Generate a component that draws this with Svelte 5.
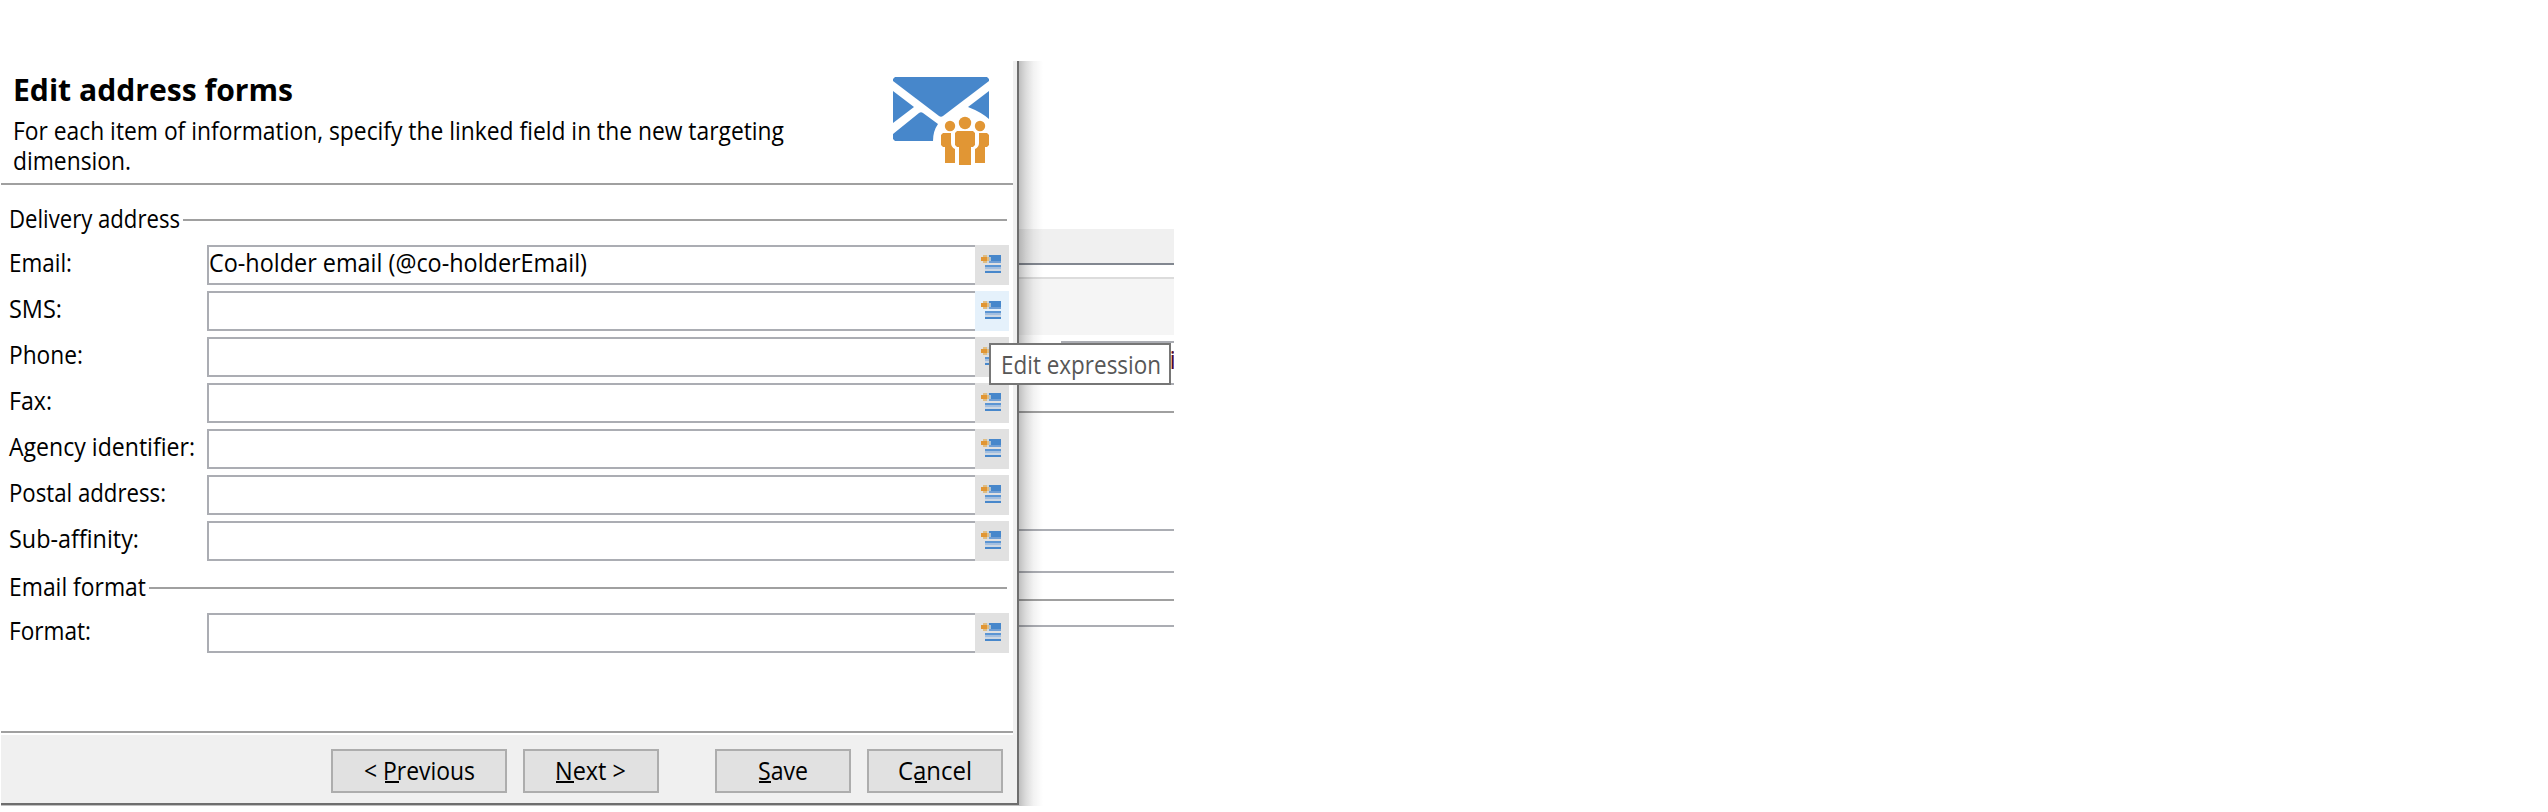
<script>
  const deliveryFields = [
    { label: 'Email:', w: 63, value: 'Co-holder email (@co-holderEmail)' },
    { label: 'SMS:', w: 53 },
    { label: 'Phone:', w: 74 },
    { label: 'Fax:', w: 43 },
    { label: 'Agency identifier:', w: 186 },
    { label: 'Postal address:', w: 157 },
    { label: 'Sub-affinity:', w: 130 },
  ];
  const formatFields = [{ label: 'Format:', w: 82 }];
  const buttons = [
    { name: 'prev', before: '< ', key: 'P', after: 'revious', w: 111, ux: 21, uw: 14 },
    { name: 'next', before: '', key: 'N', after: 'ext >', w: 71, ux: 1, uw: 18 },
    { name: 'save', before: '', key: 'S', after: 'ave', w: 50, ux: 1, uw: 12 },
    { name: 'cancel', before: 'C', key: 'a', after: 'ncel', w: 74, ux: 17, uw: 12 },
  ];
  let hovered = $state(1);
</script>

{#snippet line(text, w, h, base)}
  <svg class="line" width={w} height={h}><text x="0" y={base} textLength={w} lengthAdjust="spacingAndGlyphs">{text}</text></svg>
{/snippet}

{#snippet exprIcon()}
  <svg class="expr" width="20" height="18" viewBox="0 0 20 18" shape-rendering="crispEdges">
    <path fill="#4787cb" d="M8 0h12v6H8zM4 16h16v2H4z" />
    <path fill="#709fd5" d="M8 6h12v2H8z" />
    <path fill="#5b95d3" d="M4 10h16v2H4z" />
    <path fill="#a3bfe0" d="M4 12h16v2H4z" />
    <path fill="#cdd7e2" d="M4 14h16v2H4zM6 0h2v8H6z" />
    <path fill="#adc1d2" d="M8 2h2v4H8z" />
    <path fill="#dfbd83" d="M2 0h4v2H2zM6 2h2v4H6zM2 6h4v2H2z" />
    <path fill="#e19634" d="M0 2h6v4H0z" />
  </svg>
{/snippet}

{#snippet rows(fields, offset)}
  {#each fields as f, i}
    <div class="row">
      <div class="label">{@render line(f.label, f.w, 40, 27)}</div>
      <div class="input">{#if f.value}{@render line(f.value, 378, 36, 24.5)}{/if}</div>
      <button class="pick" class:hot={hovered === i + offset} onmouseenter={() => (hovered = i + offset)}>
        {@render exprIcon()}
      </button>
    </div>
  {/each}
{/snippet}

<main>
  <section class="backdrop">
    <div class="band"></div>
    <div class="rule pale"></div>
    <div class="panel"></div>
    <div class="cell"><svg class="line" width="6" height="36"><text x="1.500" y="26">i</text></svg></div>
    <div class="rule r1"></div>
    <div class="rule r2"></div>
    <div class="rule r3"></div>
    <div class="rule r4"></div>
    <div class="rule r5"></div>
  </section>
  <div class="shade-right"></div>
  <div class="shade-bottom"></div>

  <section class="dialog">
    <header>
      <div class="heading">
        <h1>{@render line('Edit address forms', 280, 36, 30)}</h1>
        <p>{@render line('For each item of information, specify the linked field in the new targeting', 771, 30, 22.5)}</p>
        <p>{@render line('dimension.', 118, 30, 22.5)}</p>
      </div>
      <svg class="logo" width="96" height="88" viewBox="0 0 96 88">
        <g fill="#4787cb">
          <path d="M2 0H94L96 2V4L50 39Q48 40.500 46 39L0 4V2z" />
          <path d="M0 14L21 30L0 46z" />
          <path d="M96 14V42Q88 35 75 30z" />
          <path d="M0 57L26 36Q28 34.500 30 36L45 47Q40 54 40 64H2L0 62z" />
        </g>
        <g fill="#e19634">
          <circle cx="57" cy="49" r="5.200" /><circle cx="72" cy="46" r="6.200" /><circle cx="87" cy="49" r="5.200" />
          <path d="M64 54H80L82 56V68L80 70H78V88H66V70H64L62 68V56z" />
          <path d="M50 56H58V66Q58 70 62 72V86H52V70H50L48 68V58z" />
          <path d="M94 56H86V66Q86 70 82 72V86H92V70H94L96 68V58z" />
        </g>
      </svg>
    </header>

    <div class="body">
      <div class="group">{@render line('Delivery address', 171, 24, 17.5)}<i></i></div>
      {@render rows(deliveryFields, 0)}
      <div class="group second">{@render line('Email format', 137, 24, 17.5)}<i></i></div>
      {@render rows(formatFields, 7)}
    </div>

    <footer>
      {#each buttons as b}
        <button class="cmd {b.name}">
          <svg class="line" width={b.w} height="40">
            <text x="0" y="28.5" textLength={b.w} lengthAdjust="spacingAndGlyphs">{b.before}{b.key}{b.after}</text>
            <rect x={b.ux} y="30" width={b.uw} height="2" />
          </svg>
        </button>
      {/each}
    </footer>
  </section>

  <div class="tooltip">{@render line('Edit expression', 160, 38, 28.5)}</div>
</main>

<style>
  :global(body) { margin: 0; background: #fff; }
  main {
    position: relative; width: 2548px; height: 812px; overflow: hidden; background: #fff;
    font-family: 'Open Sans', 'Noto Sans', sans-serif; font-size: 25px; color: #000;
  }
  svg { display: block; flex: none; overflow: visible; }
  .line text { white-space: pre; fill: currentColor; }
  h1, p { margin: 0; font-size: inherit; font-weight: 400; }

  .backdrop { position: absolute; left: 1017px; top: 229px; width: 157px; overflow: hidden; }
  .band { height: 34px; background: #f0f0f0; border-bottom: 2px solid #828790; }
  .rule { height: 2px; background: #abadb3; }
  .pale { margin-top: 12px; background: #dcdcdc; }
  .panel { height: 56px; background: #f5f5f5; }
  .cell {
    height: 40px; margin: 6px 0 0 44px; border: solid #abadb3; border-width: 2px 0;
    display: flex; justify-content: flex-end; color: #500a30;
  }
  .r1 { margin-top: 26px; background: #a0a0a0; }
  .r2 { margin-top: 116px; }
  .r3 { margin-top: 40px; }
  .r4 { margin-top: 26px; background: #a0a0a0; }
  .r5 { margin-top: 24px; }
  .shade-right {
    position: absolute; left: 1019px; top: 61px; width: 24px; height: 745px;
    background: linear-gradient(to right, rgba(0,0,0,.25), rgba(0,0,0,.14) 28%, rgba(0,0,0,.05) 60%, transparent);
  }
  .shade-bottom { position: absolute; left: 1px; top: 805px; width: 1018px; height: 1px; background: #c0c0c0; }

  .dialog {
    position: absolute; left: 1px; top: 61px; width: 1018px; height: 744px; box-sizing: border-box;
    display: flex; flex-direction: column; background: #f0f0f0;
    border: solid #6e6e6e; border-width: 0 2px 2px 0;
  }
  header, .body { width: 1012px; background: #fff; box-sizing: border-box; }
  header { height: 124px; border-bottom: 2px solid #a0a0a0; display: flex; }
  .heading { width: 892px; padding: 10px 0 0 12px; box-sizing: border-box; }
  h1 { font-size: 30.500px; font-weight: 700; padding: 0 0 10px; }
  .logo { margin-top: 16px; }
  .body { height: 548px; padding: 25px 4px 0 8px; border-bottom: 2px solid #a0a0a0; }
  .group { display: flex; height: 24px; margin-bottom: 11px; }
  .group i { flex: 1; height: 2px; margin: 9px 2px 0 3px; background: #a0a0a0; }
  .second { margin-top: 17px; }
  .row { display: flex; height: 40px; margin-bottom: 6px; }
  .label { width: 198px; flex: none; }
  .input { width: 766px; height: 36px; border: 2px solid #abadb3; border-right: 0; flex: none; }
  .pick {
    display: flex; align-items: flex-start; width: 34px; height: 40px; padding: 10px 0 0 6px;
    border: 0; background: #e1e1e1; flex: none;
  }
  .pick.hot { background: #e5f1fb; }

  footer {
    height: 70px; width: 1016px; display: flex; gap: 16px; padding: 16px 0 0 330px; box-sizing: border-box;
    background: linear-gradient(#fff 2px, transparent 2px) 0 0 / 1012px 70px no-repeat;
  }
  .cmd {
    width: 136px; height: 44px; padding: 0; border: 2px solid #adadad; background: #e1e1e1; box-sizing: border-box;
    display: flex; justify-content: center; font: inherit; color: inherit; flex: none;
  }
  .prev { width: 176px; }
  .next { padding-right: 2px; }
  .save { margin-left: 40px; }

  .tooltip {
    position: absolute; left: 989px; top: 343px; width: 182px; height: 42px; box-sizing: border-box;
    border: 2px solid #767676; background: #fff; color: #575757; padding-left: 10px;
  }
</style>
